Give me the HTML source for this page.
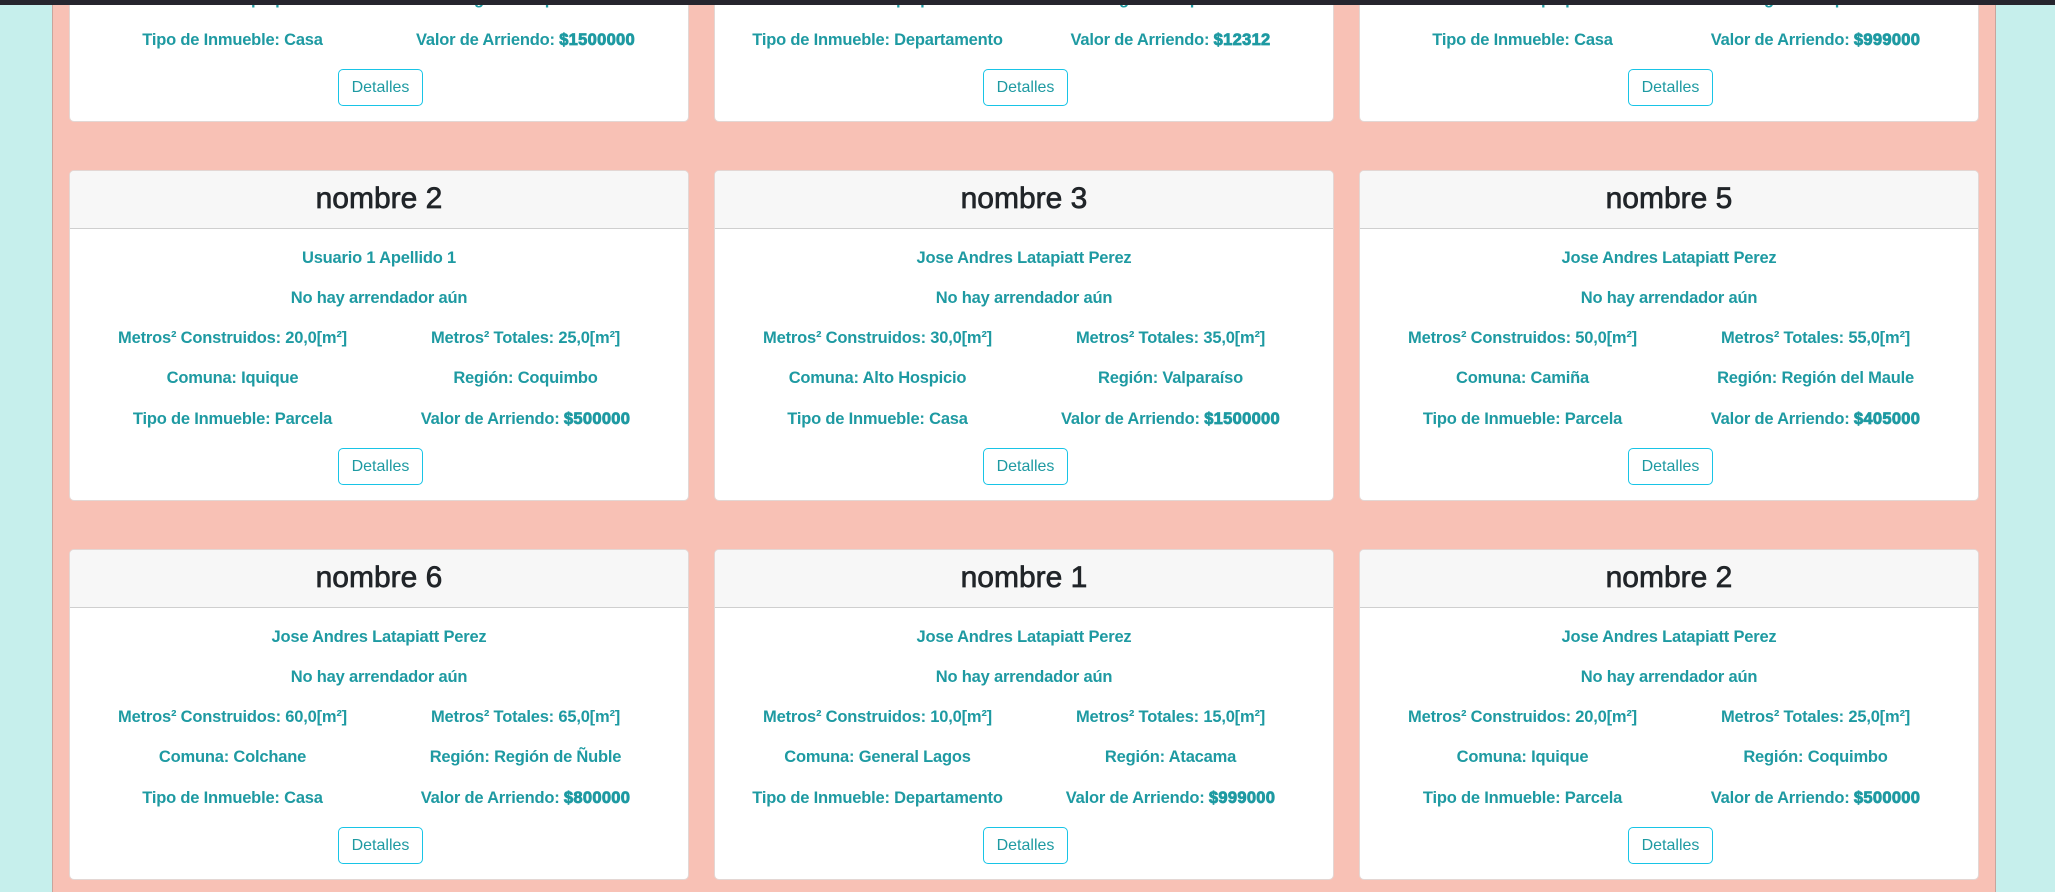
<!DOCTYPE html>
<html><head><meta charset="utf-8"><style>
*{box-sizing:border-box;margin:0;padding:0}
body{width:2055px;height:892px;overflow:hidden;background:#c6efec;font-family:"Liberation Sans",sans-serif;position:relative}
.pink{position:absolute;left:52px;top:0;width:1944px;height:892px;background:#f8c1b5;border-left:1px solid #c9a59c;border-right:1px solid #c9a59c}
.bar{position:absolute;left:0;top:0;width:2055px;height:5px;background:#26252e;z-index:5}
.card{position:absolute;width:620px;height:331px;background:#fff;border:1px solid #e3d7d4;border-radius:5px;overflow:hidden}
.hd{position:absolute;left:0;top:0;width:100%;height:58px;background:#f7f7f7;border-bottom:1px solid #cfcfcf;text-align:center;font-size:30px;line-height:56px;color:#212529;-webkit-text-stroke:0.7px #212529}
.ln{position:absolute;left:16px;right:16px;height:20px;line-height:20px;font-size:16.5px;font-weight:bold;color:#1e9aa2;display:flex;text-align:center;letter-spacing:-0.2px}
.ln span{flex:1;white-space:nowrap}
.ln b{font-weight:bold;-webkit-text-stroke:0.8px #1e9aa2;letter-spacing:0.3px}
.btn{position:absolute;left:268px;top:277px;width:85px;height:37px;border:1px solid #18c4e6;border-radius:5px;color:#1e9aa2;font-size:16px;line-height:35px;text-align:center}
</style></head><body>
<div class="pink"></div><div class="bar"></div>

<!-- row 1 -->
<div class="card" style="left:69px;top:-209px">
<div class="ln" style="top:197px"><span>Comuna: Iquique</span><span>Región: Coquimbo</span></div>
<div class="ln" style="top:238px"><span>Tipo de Inmueble: Casa</span><span>Valor de Arriendo: <b>$1500000</b></span></div>
<div class="btn">Detalles</div></div>
<div class="card" style="left:714px;top:-209px">
<div class="ln" style="top:197px"><span>Comuna: Iquique</span><span>Región: Coquimbo</span></div>
<div class="ln" style="top:238px"><span>Tipo de Inmueble: Departamento</span><span>Valor de Arriendo: <b>$12312</b></span></div>
<div class="btn">Detalles</div></div>
<div class="card" style="left:1359px;top:-209px">
<div class="ln" style="top:197px"><span>Comuna: Iquique</span><span>Región: Coquimbo</span></div>
<div class="ln" style="top:238px"><span>Tipo de Inmueble: Casa</span><span>Valor de Arriendo: <b>$999000</b></span></div>
<div class="btn">Detalles</div></div>

<!-- row 2 -->
<div class="card" style="left:69px;top:170px"><div class="hd">nombre 2</div>
<div class="ln" style="top:77px"><span>Usuario 1 Apellido 1</span></div>
<div class="ln" style="top:117px"><span>No hay arrendador aún</span></div>
<div class="ln" style="top:157px"><span>Metros² Construidos: 20,0[m²]</span><span>Metros² Totales: 25,0[m²]</span></div>
<div class="ln" style="top:197px"><span>Comuna: Iquique</span><span>Región: Coquimbo</span></div>
<div class="ln" style="top:238px"><span>Tipo de Inmueble: Parcela</span><span>Valor de Arriendo: <b>$500000</b></span></div>
<div class="btn">Detalles</div></div>
<div class="card" style="left:714px;top:170px"><div class="hd">nombre 3</div>
<div class="ln" style="top:77px"><span>Jose Andres Latapiatt Perez</span></div>
<div class="ln" style="top:117px"><span>No hay arrendador aún</span></div>
<div class="ln" style="top:157px"><span>Metros² Construidos: 30,0[m²]</span><span>Metros² Totales: 35,0[m²]</span></div>
<div class="ln" style="top:197px"><span>Comuna: Alto Hospicio</span><span>Región: Valparaíso</span></div>
<div class="ln" style="top:238px"><span>Tipo de Inmueble: Casa</span><span>Valor de Arriendo: <b>$1500000</b></span></div>
<div class="btn">Detalles</div></div>
<div class="card" style="left:1359px;top:170px"><div class="hd">nombre 5</div>
<div class="ln" style="top:77px"><span>Jose Andres Latapiatt Perez</span></div>
<div class="ln" style="top:117px"><span>No hay arrendador aún</span></div>
<div class="ln" style="top:157px"><span>Metros² Construidos: 50,0[m²]</span><span>Metros² Totales: 55,0[m²]</span></div>
<div class="ln" style="top:197px"><span>Comuna: Camiña</span><span>Región: Región del Maule</span></div>
<div class="ln" style="top:238px"><span>Tipo de Inmueble: Parcela</span><span>Valor de Arriendo: <b>$405000</b></span></div>
<div class="btn">Detalles</div></div>

<!-- row 3 -->
<div class="card" style="left:69px;top:549px"><div class="hd">nombre 6</div>
<div class="ln" style="top:77px"><span>Jose Andres Latapiatt Perez</span></div>
<div class="ln" style="top:117px"><span>No hay arrendador aún</span></div>
<div class="ln" style="top:157px"><span>Metros² Construidos: 60,0[m²]</span><span>Metros² Totales: 65,0[m²]</span></div>
<div class="ln" style="top:197px"><span>Comuna: Colchane</span><span>Región: Región de Ñuble</span></div>
<div class="ln" style="top:238px"><span>Tipo de Inmueble: Casa</span><span>Valor de Arriendo: <b>$800000</b></span></div>
<div class="btn">Detalles</div></div>
<div class="card" style="left:714px;top:549px"><div class="hd">nombre 1</div>
<div class="ln" style="top:77px"><span>Jose Andres Latapiatt Perez</span></div>
<div class="ln" style="top:117px"><span>No hay arrendador aún</span></div>
<div class="ln" style="top:157px"><span>Metros² Construidos: 10,0[m²]</span><span>Metros² Totales: 15,0[m²]</span></div>
<div class="ln" style="top:197px"><span>Comuna: General Lagos</span><span>Región: Atacama</span></div>
<div class="ln" style="top:238px"><span>Tipo de Inmueble: Departamento</span><span>Valor de Arriendo: <b>$999000</b></span></div>
<div class="btn">Detalles</div></div>
<div class="card" style="left:1359px;top:549px"><div class="hd">nombre 2</div>
<div class="ln" style="top:77px"><span>Jose Andres Latapiatt Perez</span></div>
<div class="ln" style="top:117px"><span>No hay arrendador aún</span></div>
<div class="ln" style="top:157px"><span>Metros² Construidos: 20,0[m²]</span><span>Metros² Totales: 25,0[m²]</span></div>
<div class="ln" style="top:197px"><span>Comuna: Iquique</span><span>Región: Coquimbo</span></div>
<div class="ln" style="top:238px"><span>Tipo de Inmueble: Parcela</span><span>Valor de Arriendo: <b>$500000</b></span></div>
<div class="btn">Detalles</div></div>
</body></html>
